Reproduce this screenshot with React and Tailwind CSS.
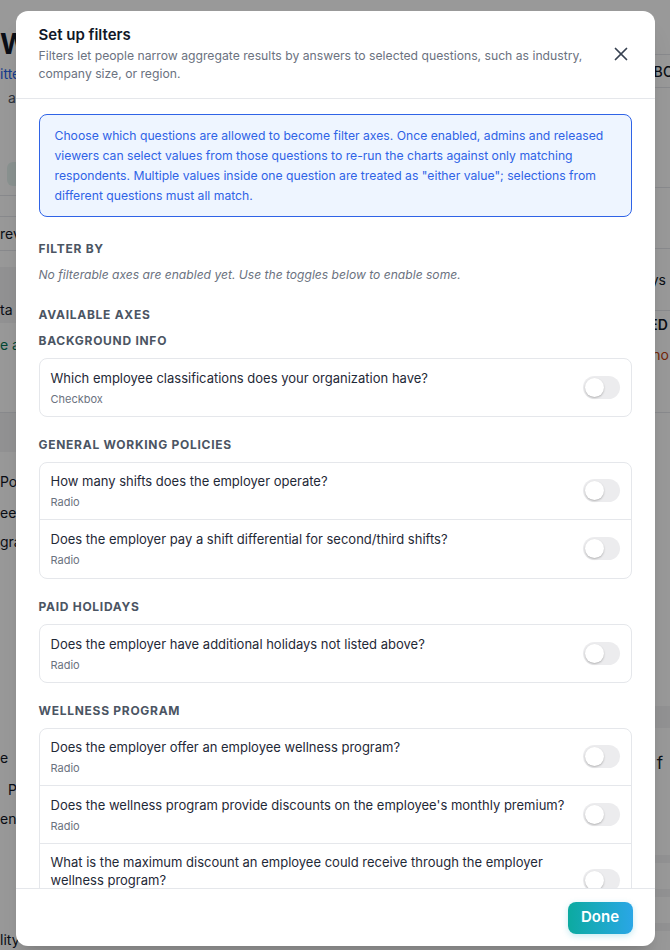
import React from "react";
import { X } from "lucide-react";

const sections = [
  {
    title: "BACKGROUND INFO",
    items: [{ q: "Which employee classifications does your organization have?", t: "Checkbox" }],
  },
  {
    title: "GENERAL WORKING POLICIES",
    items: [
      { q: "How many shifts does the employer operate?", t: "Radio" },
      { q: "Does the employer pay a shift differential for second/third shifts?", t: "Radio" },
    ],
  },
  {
    title: "PAID HOLIDAYS",
    items: [{ q: "Does the employer have additional holidays not listed above?", t: "Radio" }],
  },
  {
    title: "WELLNESS PROGRAM",
    items: [
      { q: "Does the employer offer an employee wellness program?", t: "Radio" },
      { q: "Does the wellness program provide discounts on the employee's monthly premium?", t: "Radio" },
      { q: "What is the maximum discount an employee could receive through the employer wellness program?", t: "Radio" },
    ],
  },
];

function Toggle() {
  return (
    <div className="w-[37px] h-[23px] rounded-full bg-[#ececee] p-[2px] shrink-0 flex items-center">
      <div className="w-[19px] h-[19px] rounded-full bg-white shadow-[0_1px_2px_rgba(0,0,0,0.25)]" />
    </div>
  );
}

function Background() {
  return (
    <div className="w-[670px] h-[950px] bg-white flex text-[#111827] overflow-hidden">
      <div className="w-[140px] shrink-0 flex flex-col text-[14px]">
        <div className="h-[30px]" />
        <div className="h-[30px] text-[28px] font-bold leading-[30px] whitespace-nowrap">Wage Survey</div>
        <div className="h-[4px]" />
        <div className="h-[20px] text-[#2563eb] whitespace-nowrap">itted</div>
        <div className="h-[4px]" />
        <div className="h-[20px] text-[#4b5563] whitespace-nowrap pl-[8px]">are</div>
        <div className="h-[57px]" />
        <div className="h-[24px] pl-[7px]"><div className="w-[40px] h-[24px] rounded-md bg-[#e6f4f1]" /></div>
        <div className="h-[10px] border-b border-[#e5e7eb]" />
        <div className="h-[22px] border-b border-[#e5e7eb]" />
        <div className="h-[35px] flex items-center border-b border-[#e5e7eb] whitespace-nowrap">review</div>
        <div className="h-[16px]" />
        <div className="h-[58px] bg-[#f3f4f6] flex items-end pb-[3px] whitespace-nowrap">ta</div>
        <div className="h-[32px] flex items-end text-[#047857] whitespace-nowrap">e a</div>
        <div className="h-[60px] border-b border-[#e5e7eb]" />
        <div className="h-[40px] bg-[#f3f4f6]" />
        <div className="h-[20px]" />
        <div className="h-[22px] whitespace-nowrap">Policies</div>
        <div className="h-[10px]" />
        <div className="h-[22px] whitespace-nowrap">ees</div>
        <div className="h-[8px]" />
        <div className="h-[22px] whitespace-nowrap">gram</div>
        <div className="h-[200px]" />
        <div className="h-[22px] whitespace-nowrap">e</div>
        <div className="h-[11px]" />
        <div className="h-[22px] whitespace-nowrap pl-[8px]">Plans</div>
        <div className="h-[8px]" />
        <div className="h-[22px] whitespace-nowrap">enefits</div>
        <div className="h-[102px]" />
        <div className="h-[22px] whitespace-nowrap">lity</div>
      </div>
      <div className="flex-1" />
      <div className="w-[30px] shrink-0 flex flex-col text-[14px]">
        <div className="h-[55px] border-b border-[#e5e7eb]" />
        <div className="h-[33px] border-b border-[#e5e7eb] flex items-center font-medium whitespace-nowrap tracking-wide pl-[4px]">RBC</div>
        <div className="h-[100px] border-b border-[#e5e7eb]" />
        <div className="h-[61px] border-b border-[#e5e7eb]" />
        <div className="h-[62px] border-b border-[#e5e7eb] flex items-center whitespace-nowrap pl-[3px]">ays</div>
        <div className="h-[24px] flex items-end font-semibold whitespace-nowrap">TED</div>
        <div className="h-[30px] flex items-end text-[#c2410c] whitespace-nowrap">n no</div>
        <div className="h-[48px] border-b border-[#e5e7eb]" />
        <div className="h-[293px]" />
        <div className="h-[22px] bg-[#f3f4f6]" />
        <div className="h-[14px]" />
        <div className="h-[44px] flex items-center text-[17px] whitespace-nowrap pl-[2px]">e f</div>
        <div className="h-[69px]" />
        <div className="h-[8px] bg-[#f3f4f6]" />
        <div className="h-[26px]" />
        <div className="h-[8px] bg-[#f3f4f6]" />
        <div className="h-[26px]" />
        <div className="h-[8px] bg-[#f3f4f6]" />
      </div>
    </div>
  );
}

export default function App() {
  return (
    <div className="relative w-[670px] h-[950px] overflow-hidden font-['Inter',sans-serif]">
      <Background />
      <div className="absolute inset-0 bg-black/40 flex justify-center items-start pt-[11px]">
        <div className="w-[639px] h-[935px] bg-white rounded-xl flex flex-col overflow-hidden shadow-xl">
          <div className="flex items-start gap-4 px-[23px] pt-[14px] pb-[16px] border-b border-[#e5e7eb]">
            <div className="flex-1 min-w-0">
              <div className="text-[15px] leading-[20px] font-semibold text-[#111827]">Set up filters</div>
              <div className="mt-[2px] text-[12.2px] leading-[17.5px] text-[#6b7280]">
                Filters let people narrow aggregate results by answers to selected questions, such as industry, company size, or region.
              </div>
            </div>
            <button className="mt-[18px] text-[#374151]">
              <X size={22} strokeWidth={1.9} />
            </button>
          </div>

          <div className="flex-1 overflow-hidden px-[23px] pt-[15px]">
            <div className="rounded-lg border border-[#2f63e6] bg-[#eef5ff] px-[15px] pt-[11px] pb-[10px] text-[12.2px] leading-[20px] text-[#2f63e6]">
              Choose which questions are allowed to become filter axes. Once enabled, admins and released viewers can select values from those questions to re-run the charts against only matching respondents. Multiple values inside one question are treated as "either value"; selections from different questions must all match.
            </div>

            <div className="mt-[24px] text-[12px] leading-[16px] font-bold tracking-[0.06em] text-[#4b5563]">FILTER BY</div>
            <div className="mt-[10px] text-[12.1px] leading-[16px] italic text-[#6b7280]">
              No filterable axes are enabled yet. Use the toggles below to enable some.
            </div>

            <div className="mt-[24px] text-[12px] leading-[16px] font-bold tracking-[0.06em] text-[#4b5563]">AVAILABLE AXES</div>

            {sections.map((s, si) => (
              <div key={s.title} className={si === 0 ? "mt-[10px]" : "mt-[20px]"}>
                <div className="text-[12px] leading-[16px] font-bold tracking-[0.06em] text-[#4b5563]">{s.title}</div>
                <div className="mt-[9px] rounded-lg border border-[#e5e7eb] divide-y divide-[#e5e7eb]">
                  {s.items.map((it, i) => (
                    <div
                      key={it.q}
                      className={
                        "flex items-center gap-4 pl-[11px] pr-[11px] pt-[9px] pb-[10px] " +
                        (i === 0 ? "min-h-[57px]" : "min-h-[58px]")
                      }
                    >
                      <div className="flex-1 min-w-0">
                        <div className="text-[13px] leading-[18px] text-[#1f2937]">{it.q}</div>
                        <div className="mt-[5px] text-[11px] leading-[14px] text-[#6b7280]">{it.t}</div>
                      </div>
                      <Toggle />
                    </div>
                  ))}
                </div>
              </div>
            ))}
          </div>

          <div className="h-[58px] shrink-0 border-t border-[#e5e7eb] flex items-center justify-end px-[22px]">
            <button className="h-[32px] w-[65px] rounded-lg bg-gradient-to-r from-[#0caaa0] to-[#2aa6e6] text-white text-[15px] font-semibold shadow-[0_2px_6px_rgba(20,170,200,0.25)]">
              Done
            </button>
          </div>
        </div>
      </div>
    </div>
  );
}
